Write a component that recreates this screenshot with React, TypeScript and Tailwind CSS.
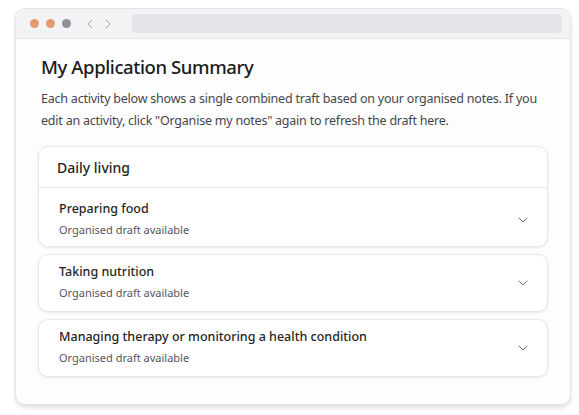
import { ChevronDown, ChevronLeft, ChevronRight } from "lucide-react";

const activities = [
  "Preparing food",
  "Taking nutrition",
  "Managing therapy or monitoring a health condition",
];

function Row({ title, first }: { title: string; first?: boolean }) {
  return (
    <div
      className={`flex items-center justify-between pl-5 pr-4 ${first ? "pt-[12px] pb-[7px]" : "pt-[8px] pb-[9px]"}`}
    >
      <div className="flex flex-col gap-[3px]">
        <span className="text-[12.5px] leading-[18px] font-medium text-[#1f1f24]">{title}</span>
        <span className="text-[11px] leading-[18px] text-[#55565c]">Organised draft available</span>
      </div>
      <ChevronDown className="h-4 w-4 text-[#6b6c72]" strokeWidth={1.5} />
    </div>
  );
}

export default function App() {
  return (
    <div className="min-h-[415px] w-[579px] bg-white pt-2 pl-[15px] font-['Noto_Sans',sans-serif]">
      <div className="w-[556px] overflow-hidden rounded-[10px] border border-[#e3e3e8] bg-[#fdfdfe] shadow-[0_3px_4px_rgba(0,0,0,0.12)]">
        <div className="flex h-[30px] items-center gap-[7px] border-b border-[#e6e6ea] bg-[#f3f3f6] pl-[14px] pr-2">
          <span className="h-[9px] w-[9px] rounded-full bg-[#e59b72]" />
          <span className="h-[9px] w-[9px] rounded-full bg-[#e59b72]" />
          <span className="h-[9px] w-[9px] rounded-full bg-[#8e9294]" />
          <div className="ml-[4px] flex items-center gap-[2px] text-[#a3a4aa]">
            <ChevronLeft className="h-4 w-4" strokeWidth={1.5} />
            <ChevronRight className="h-4 w-4" strokeWidth={1.5} />
          </div>
          <div className="ml-[9px] h-[19px] flex-1 rounded-[4px] bg-[#e6e6ea]" />
        </div>

        <div className="px-[22px] pt-[15px] pb-[27px]">
          <h1 className="px-[3px] text-[18.5px] leading-[26px] font-medium tracking-[-0.4px] text-[#1b1b20]">
            My Application Summary
          </h1>
          <p className="mt-[8px] px-[3px] text-[12.5px] leading-[22px] tracking-[-0.22px] text-[#45464c]">
            Each activity below shows a single combined traft based on your organised notes. If you edit an
            activity, click "Organise my notes" again to refresh the draft here.
          </p>

          <div className="mt-[14px] flex flex-col gap-[7px]">
            <div className="rounded-[10px] border border-[#e6e6eb] bg-white shadow-[0_1px_3px_rgba(0,0,0,0.08)]">
              <div className="flex h-[41px] items-center border-b border-[#e8e8ed] px-[18px]">
                <span className="text-[14px] font-medium text-[#1f1f24]">Daily living</span>
              </div>
              <Row title={activities[0]} first />
            </div>
            {activities.slice(1).map((t) => (
              <div
                key={t}
                className="rounded-[10px] border border-[#e6e6eb] bg-white shadow-[0_1px_3px_rgba(0,0,0,0.08)]"
              >
                <Row title={t} />
              </div>
            ))}
          </div>
        </div>
      </div>
    </div>
  );
}
